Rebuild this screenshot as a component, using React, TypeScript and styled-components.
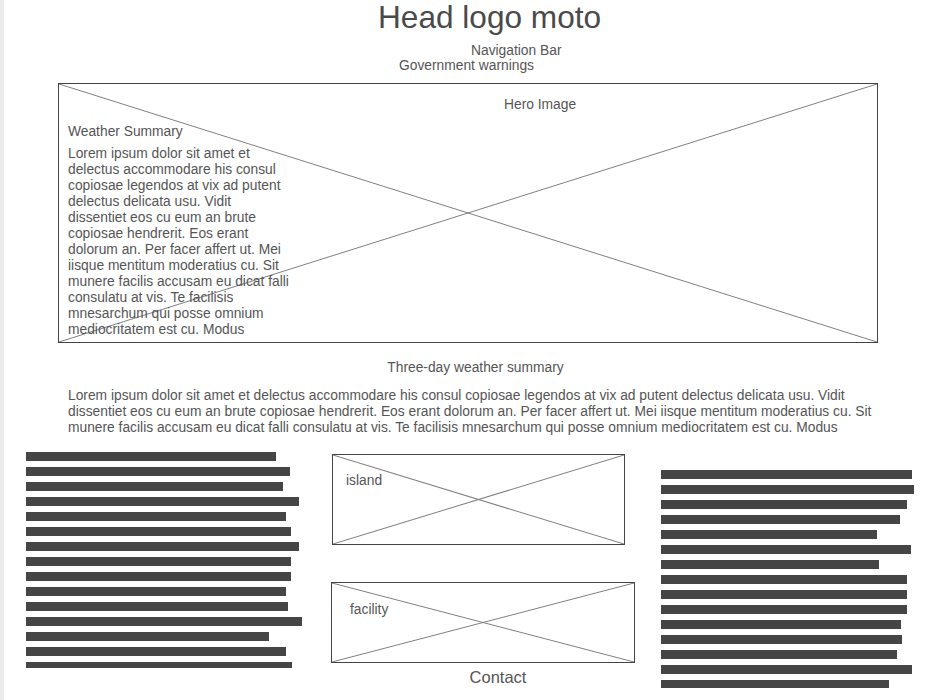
import React from "react";
import styled, { createGlobalStyle } from "styled-components";

const GlobalStyle = createGlobalStyle`
  html, body {
    margin: 0;
    padding: 0;
    background: #ffffff;
  }
  body {
    font-family: "Liberation Sans", Arial, sans-serif;
    color: #555555;
  }
`;

const heroLines = [
  "Lorem ipsum dolor sit amet et",
  "delectus accommodare his consul",
  "copiosae legendos at vix ad putent",
  "delectus delicata usu. Vidit",
  "dissentiet eos cu eum an brute",
  "copiosae hendrerit. Eos erant",
  "dolorum an. Per facer affert ut. Mei",
  "iisque mentitum moderatius cu. Sit",
  "munere facilis accusam eu dicat falli",
  "consulatu at vis. Te facilisis",
  "mnesarchum qui posse omnium",
  "mediocritatem est cu. Modus",
];

const summaryLines = [
  "Lorem ipsum dolor sit amet et delectus accommodare his consul copiosae legendos at vix ad putent delectus delicata usu. Vidit",
  "dissentiet eos cu eum an brute copiosae hendrerit. Eos erant dolorum an. Per facer affert ut. Mei iisque mentitum moderatius cu. Sit",
  "munere facilis accusam eu dicat falli consulatu at vis. Te facilisis mnesarchum qui posse omnium mediocritatem est cu. Modus",
];

const leftBars = [250, 264, 257, 273, 260, 265, 273, 265, 265, 260, 262, 276, 243, 260, 266];
const rightBars = [251, 253, 246, 239, 216, 250, 218, 246, 246, 246, 240, 241, 236, 251, 228];

const Page = styled.div`
  min-height: 700px;
  border-left: 4px solid #ebebeb;
  box-sizing: border-box;
  display: flex;
  flex-direction: column;
`;

const Header = styled.header`
  display: flex;
  flex-direction: column;
`;

const Title = styled.h1`
  margin: 0;
  padding-left: 374px;
  font-size: 31.6px;
  font-weight: normal;
  line-height: 34px;
  color: #4a4a4a;
`;

const HeadLine = styled.div<{ $left: number; $top?: number }>`
  padding-left: ${(p) => p.$left}px;
  margin-top: ${(p) => p.$top ?? 0}px;
  font-size: 13.8px;
  line-height: 15px;
`;

const XBox = styled.div<{ $w: number; $h: number }>`
  position: relative;
  box-sizing: border-box;
  width: ${(p) => p.$w}px;
  height: ${(p) => p.$h}px;
  border: 1px solid #444;
  background: #fff;
`;

const Cross = styled.svg`
  position: absolute;
  inset: 0;
  width: 100%;
  height: 100%;
  pointer-events: none;
`;

const Hero = styled(XBox)`
  margin: 10px 0 0 54px;
  padding: 13px 0 0 9px;
`;

const Layer = styled.div`
  position: relative;
  font-size: 13.8px;
  line-height: 16px;
`;

const HeroLabel = styled.div`
  margin-left: 436px;
`;

const SideTitle = styled.div`
  margin-top: 11px;
`;

const SideText = styled.p`
  margin: 6px 0 0;
`;

const SectionTitle = styled.div`
  margin-top: 17px;
  text-align: center;
  font-size: 13.8px;
  line-height: 16px;
  padding-right: 2px;
`;

const Summary = styled.p`
  margin: 12px 0 0 64px;
  font-size: 13.8px;
  line-height: 16px;
  white-space: nowrap;
`;

const Lower = styled.section`
  display: flex;
  align-items: flex-start;
  margin-top: 16px;
  padding-left: 22px;
`;

const BarColumn = styled.div<{ $w: number; $top: number; $gap: number }>`
  width: ${(p) => p.$w}px;
  margin-top: ${(p) => p.$top}px;
  margin-left: ${(p) => p.$gap}px;
  display: flex;
  flex-direction: column;
  gap: 6px;
`;

const Bar = styled.div<{ $h?: number }>`
  height: ${(p) => p.$h ?? 9}px;
  background: #454545;
`;

const Middle = styled.div`
  width: 304px;
  margin-left: 29px;
  display: flex;
  flex-direction: column;
`;

const Tile = styled(XBox)<{ $ml: number; $mt: number; $pl: number; $pt: number }>`
  margin: ${(p) => p.$mt}px 0 0 ${(p) => p.$ml}px;
  padding: ${(p) => p.$pt}px 0 0 ${(p) => p.$pl}px;
`;

const Contact = styled.div`
  margin-top: 5px;
  padding-left: 30px;
  text-align: center;
  font-size: 16.5px;
  line-height: 18px;
`;

const XLines = () => (
  <Cross preserveAspectRatio="none" viewBox="0 0 100 100">
    <line x1="0" y1="0" x2="100" y2="100" stroke="#808080" strokeWidth="1" vectorEffect="non-scaling-stroke" />
    <line x1="0" y1="100" x2="100" y2="0" stroke="#808080" strokeWidth="1" vectorEffect="non-scaling-stroke" />
  </Cross>
);

export default function App() {
  return (
    <>
      <GlobalStyle />
      <Page>
        <Header>
          <Title>Head logo moto</Title>
          <HeadLine $left={467} $top={9}>Navigation Bar</HeadLine>
          <HeadLine $left={395}>Government warnings</HeadLine>
        </Header>

        <Hero $w={820} $h={260}>
          <XLines />
          <Layer>
            <HeroLabel>Hero Image</HeroLabel>
            <SideTitle>Weather Summary</SideTitle>
            <SideText>
              {heroLines.map((l, i) => (
                <React.Fragment key={i}>
                  {l}
                  <br />
                </React.Fragment>
              ))}
            </SideText>
          </Layer>
        </Hero>

        <SectionTitle>Three-day weather summary</SectionTitle>
        <Summary>
          {summaryLines.map((l, i) => (
            <React.Fragment key={i}>
              {l}
              <br />
            </React.Fragment>
          ))}
        </Summary>

        <Lower>
          <BarColumn $w={276} $top={0} $gap={0}>
            {leftBars.map((w, i) => (
              <Bar key={i} style={{ width: w }} $h={i === leftBars.length - 1 ? 6 : 9} />
            ))}
          </BarColumn>

          <Middle>
            <Tile $w={293} $h={91} $ml={1} $mt={2} $pl={13} $pt={18}>
              <XLines />
              <Layer>island</Layer>
            </Tile>
            <Tile $w={304} $h={81} $ml={0} $mt={37} $pl={18} $pt={19}>
              <XLines />
              <Layer>facility</Layer>
            </Tile>
            <Contact>Contact</Contact>
          </Middle>

          <BarColumn $w={253} $top={18} $gap={26}>
            {rightBars.map((w, i) => (
              <Bar key={i} style={{ width: w }} $h={i === rightBars.length - 1 ? 8 : 9} />
            ))}
          </BarColumn>
        </Lower>
      </Page>
    </>
  );
}
